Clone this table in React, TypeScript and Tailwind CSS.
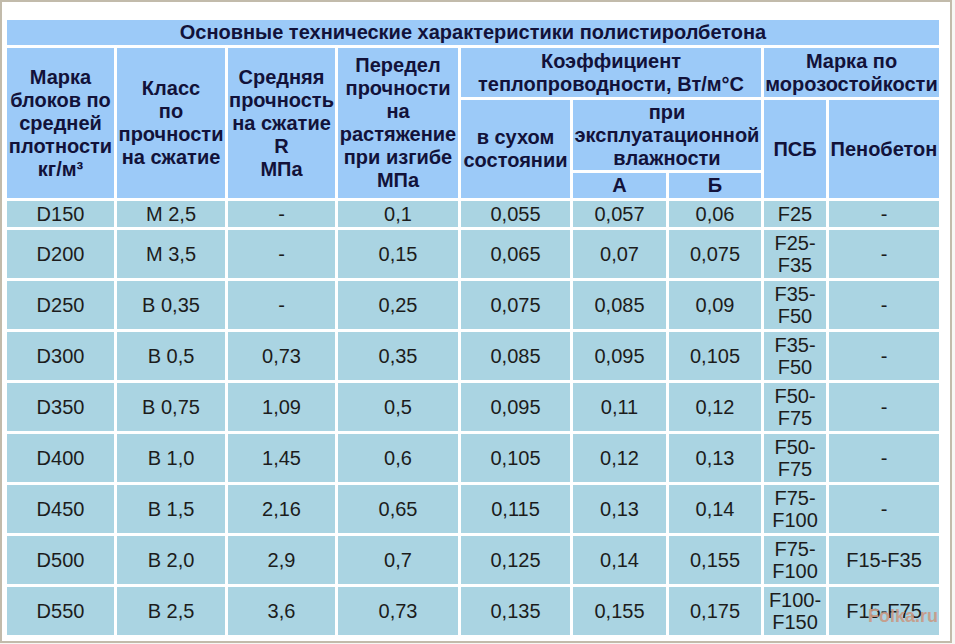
import React from "react";

const rows: string[][] = [
  ["D150", "М 2,5", "-", "0,1", "0,055", "0,057", "0,06", "F25", "-"],
  ["D200", "М 3,5", "-", "0,15", "0,065", "0,07", "0,075", "F25-|F35", "-"],
  ["D250", "В 0,35", "-", "0,25", "0,075", "0,085", "0,09", "F35-|F50", "-"],
  ["D300", "В 0,5", "0,73", "0,35", "0,085", "0,095", "0,105", "F35-|F50", "-"],
  ["D350", "В 0,75", "1,09", "0,5", "0,095", "0,11", "0,12", "F50-|F75", "-"],
  ["D400", "В 1,0", "1,45", "0,6", "0,105", "0,12", "0,13", "F50-|F75", "-"],
  ["D450", "В 1,5", "2,16", "0,65", "0,115", "0,13", "0,14", "F75-|F100", "-"],
  ["D500", "В 2,0", "2,9", "0,7", "0,125", "0,14", "0,155", "F75-|F100", "F15-F35"],
  ["D550", "В 2,5", "3,6", "0,73", "0,135", "0,155", "0,175", "F100-|F150", "F15-F75"],
];

function Lines({ text }: { text: string }) {
  const parts = text.split("|");
  return (
    <>
      {parts.map((p, i) => (
        <React.Fragment key={i}>
          {i > 0 && <br />}
          {p}
        </React.Fragment>
      ))}
    </>
  );
}

const hc =
  "bg-[#9ccaf8] text-[#12123a] font-bold text-center align-middle leading-[23px] p-0 whitespace-nowrap text-[20px]";
const dc =
  "bg-[#aad4e2] text-[#1c1c1c] text-center align-middle leading-[22px] p-0 whitespace-nowrap text-[20px]";

export default function App() {
  return (
    <div
      className="relative w-[955px] h-[644px] bg-[#f7f7f5] overflow-hidden"
      style={{ fontFamily: '"Liberation Sans", Arial, sans-serif' }}
    >
      <div className="w-[952px] h-[643px] border-2 border-[#c2bbab] bg-white pl-[2px] pt-[15px]">
        <table className="table-fixed border-separate border-spacing-[3px] w-[938px]">
          <colgroup>
            <col className="w-[107px]" />
            <col className="w-[108px]" />
            <col className="w-[107px]" />
            <col className="w-[120px]" />
            <col className="w-[109px]" />
            <col className="w-[93px]" />
            <col className="w-[92px]" />
            <col className="w-[62px]" />
            <col className="w-[110px]" />
          </colgroup>
          <tbody>
            <tr className="h-[25px]">
              <td colSpan={9} className={hc + " leading-[25px]"}>
                Основные технические характеристики полистиролбетона
              </td>
            </tr>
            <tr className="h-[49px]">
              <td rowSpan={3} className={hc}>
                <Lines text="Марка|блоков по|средней|плотности|кг/м³" />
              </td>
              <td rowSpan={3} className={hc}>
                <Lines text="Класс|по|прочности|на сжатие" />
              </td>
              <td rowSpan={3} className={hc}>
                <Lines text="Средняя|прочность|на сжатие|R|МПа" />
              </td>
              <td rowSpan={3} className={hc}>
                <Lines text="Передел|прочности|на|растяжение|при изгибе|МПа" />
              </td>
              <td colSpan={3} className={hc}>
                <Lines text="Коэффициент|теплопроводности, Вт/м°С" />
              </td>
              <td colSpan={2} className={hc}>
                <Lines text="Марка по|морозостойкости" />
              </td>
            </tr>
            <tr className="h-[70px]">
              <td rowSpan={2} className={hc}>
                <Lines text="в сухом|состоянии" />
              </td>
              <td colSpan={2} className={hc}>
                <Lines text="при|эксплуатационной|влажности" />
              </td>
              <td rowSpan={2} className={hc}>
                ПСБ
              </td>
              <td rowSpan={2} className={hc}>
                Пенобетон
              </td>
            </tr>
            <tr className="h-[25px]">
              <td className={hc}>А</td>
              <td className={hc}>Б</td>
            </tr>
            {rows.map((r, i) => (
              <tr key={r[0]} className={i === 0 ? "h-[26px]" : "h-[48px]"}>
                {r.map((c, j) => (
                  <td key={j} className={dc}>
                    <Lines text={c} />
                  </td>
                ))}
              </tr>
            ))}
          </tbody>
        </table>
      </div>
      <div className="absolute left-[868px] top-[603px] text-[18px] font-bold text-[#c99a85] opacity-90 pointer-events-none">
        Folka.ru
      </div>
    </div>
  );
}
